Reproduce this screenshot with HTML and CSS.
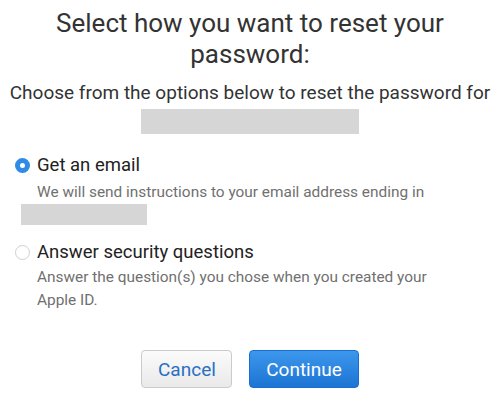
FILE: index.html
```html
<!DOCTYPE html>
<html>
<head>
  <title>Reset Password</title>
  <link rel="stylesheet" href="styles.css">
</head>
<body>
  <div class="reset">
    <h1>Select how you want to reset your password:</h1>
    <p class="intro">Choose from the options below to reset the password for</p>
    <div class="redacted account"></div>

    <div class="options">
      <label class="option">
        <span class="radio checked"></span>
        <span class="option-body">
          <span class="option-title">Get an email</span>
          <span class="option-desc">We will send instructions to your email address ending in</span>
          <span class="redacted email"></span>
        </span>
      </label>

      <label class="option">
        <span class="radio"></span>
        <span class="option-body">
          <span class="option-title">Answer security questions</span>
          <span class="option-desc">Answer the question(s) you chose when you created your Apple ID.</span>
        </span>
      </label>
    </div>

    <div class="actions">
      <button class="btn btn-cancel">Cancel</button>
      <button class="btn btn-primary">Continue</button>
    </div>
  </div>
</body>
</html>
```

FILE: styles.css
```css
body { margin: 0; background: #fff; font-family: Roboto, "Noto Sans", sans-serif; color: #333; }
.reset { padding: 8px 6px 0; }

h1 { margin: 0 auto; width: 440px; text-align: center; font-size: 26px; font-weight: 400; line-height: 31px; color: #333; }
.intro { margin: 11px 0 0; text-align: center; font-size: 19px; line-height: 24px; color: #333; }

.redacted { display: block; background: #d6d6d6; }
.account { width: 218px; height: 25px; margin: 4px auto 0; }
.email { width: 126px; height: 21px; margin: 0 0 0 -16px; }

.options { margin-top: 19px; }
.option { display: flex; align-items: flex-start; padding-left: 9px; margin-bottom: 15px; }
.option + .option { margin-top: 1px; }
.option-body { display: flex; flex-direction: column; margin-left: 7px; }
.option-title { font-size: 18.5px; line-height: 24px; color: #222; }
.option-desc { font-size: 15.4px; line-height: 23px; color: #707070; max-width: 410px; margin-top: 4px; }
.option + .option .option-desc { margin-top: 2px; }

.radio { width: 15px; height: 15px; box-sizing: border-box; border-radius: 50%; border: 1px solid #cfcfcf; background: #fff; margin-top: 5px; flex: none; }
.radio.checked { border: 5px solid #2f8ae8; background: #fff; }

.actions { display: flex; justify-content: center; gap: 17px; margin-top: 38px; }
.btn { height: 38px; font-family: inherit; font-size: 19px; border-radius: 4px; padding: 0 16px; }
.btn-cancel { width: 91px; color: #2a6fc4; background: linear-gradient(#fbfbfb, #e9e9e9); border: 1px solid #cbcbcb; }
.btn-primary { width: 110px; color: #fff; background: linear-gradient(#3d97ec, #1c74d3); border: 1px solid #1b6fcc; }
```
